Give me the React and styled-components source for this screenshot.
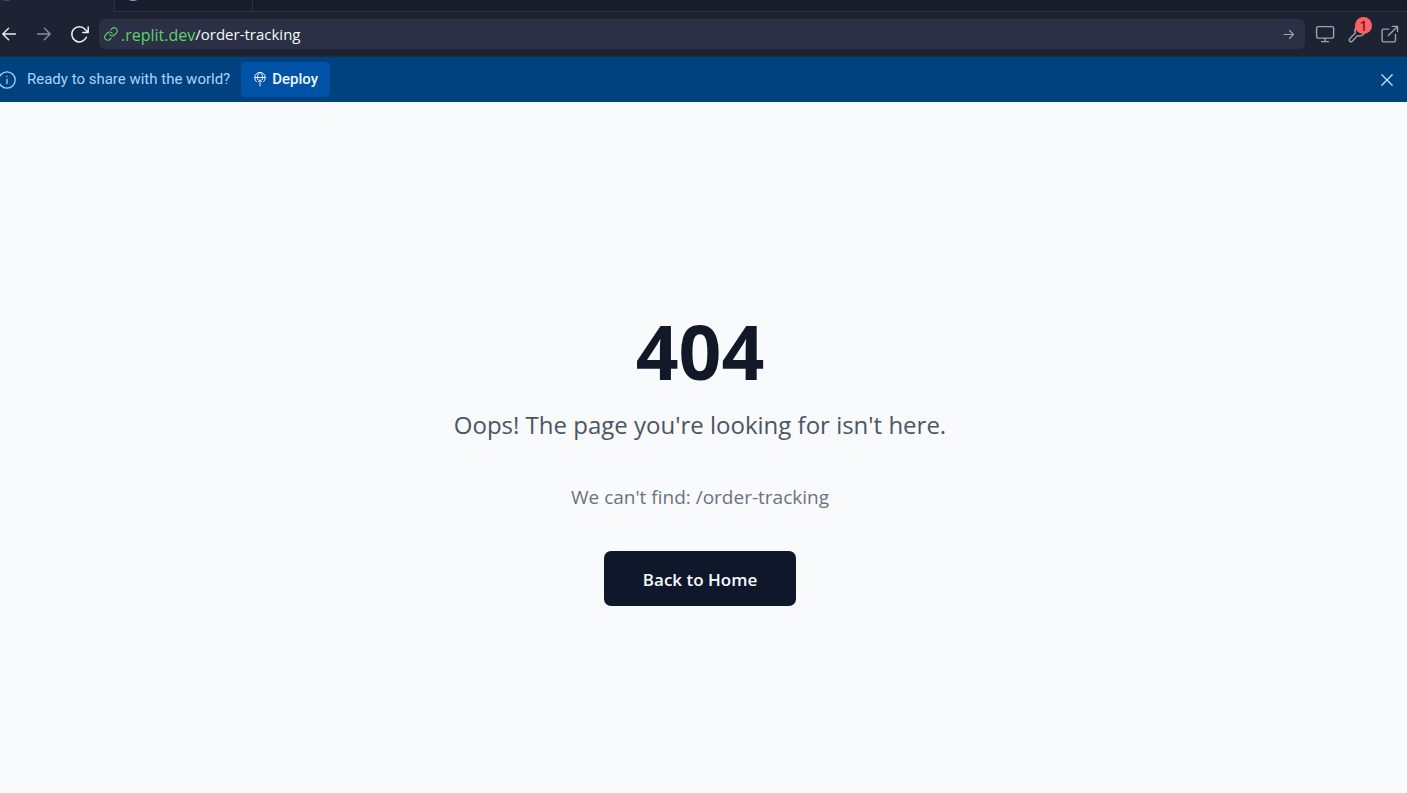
import React from "react";
import styled, { createGlobalStyle } from "styled-components";

const uiFont = `Roboto, "Liberation Sans", sans-serif`;
const pageFont = `"Open Sans", "Noto Sans", sans-serif`;

const GlobalStyle = createGlobalStyle`
  *, *::before, *::after { box-sizing: border-box; }
  body { margin: 0; background: #f9fafc; }
  button, input { font: inherit; color: inherit; }
`;

const Screen = styled.div`
  display: flex;
  flex-direction: column;
  min-height: 100vh;
  font-family: ${uiFont};
`;

const TabStrip = styled.div`
  display: flex;
  height: 12px;
  overflow: hidden;
  background: #171d2b;
`;

const Tab = styled.button`
  display: flex;
  align-items: flex-start;
  width: ${(p) => p.$width}px;
  padding: 0 0 0 ${(p) => p.$inset}px;
  border: 0;
  border-right: 1px solid #2b3245;
  border-bottom: ${(p) => (p.$active ? "0" : "1px solid #2b3245")};
  background: ${(p) => (p.$active ? "#1d2332" : "#171d2b")};
`;

const TabRest = styled.div`
  flex: 1;
  border-bottom: 1px solid #2b3245;
`;

const Favicon = styled.span`
  width: ${(p) => p.$size}px;
  height: ${(p) => p.$size}px;
  margin-top: ${(p) => 1 - p.$size}px;
  border-radius: ${(p) => (p.$round ? "50%" : "0")};
  background: ${(p) => p.$color};
`;

const Toolbar = styled.header`
  display: flex;
  align-items: center;
  gap: 10px;
  height: 45px;
  padding-right: 8px;
  border-bottom: 1px solid #262a38;
  background: #1d2332;
`;

const NavGroup = styled.nav`
  display: flex;
  align-items: center;
  gap: 17px;
`;

const ToolGroup = styled.div`
  display: flex;
  align-items: center;
  gap: 12px;
`;

const IconButton = styled.button`
  position: relative;
  display: flex;
  padding: 0;
  border: 0;
  background: none;
  color: ${(p) => p.$color || "#9ea3a8"};
  cursor: pointer;
`;

const Badge = styled.span`
  position: absolute;
  top: -7px;
  right: -5px;
  width: 17px;
  height: 17px;
  border-radius: 50%;
  background: #ff6165;
  color: #5c0a0e;
  font-family: "Noto Sans", sans-serif;
  font-size: 15px;
  line-height: 17px;
  text-align: center;
`;

const AddressBar = styled.form`
  display: flex;
  flex: 1;
  align-items: center;
  height: 30px;
  margin: 0;
  padding: 0 10px 0 5px;
  border-radius: 6px;
  background: #2b3044;
  color: #5fd16d;
  font-family: ${pageFont};
`;

const Host = styled.label`
  padding: 2px 0 0 3px;
  font-size: 16px;
  line-height: 20px;
`;

const PathInput = styled.input`
  flex: 1;
  min-width: 0;
  padding: 0;
  border: 0;
  outline: 0;
  background: none;
  color: #f5f9fc;
  font-size: 15px;
  line-height: 20px;
`;

const Banner = styled.section`
  display: flex;
  align-items: center;
  height: 45px;
  padding-right: 12px;
  background: #00427f;
  color: #a9d5fb;
  font-size: 15px;
`;

const BannerText = styled.p`
  flex: none;
  margin: 0 11px;
  padding-bottom: 1px;
  line-height: 20px;
`;

const InfoIcon = styled.svg`
  flex: none;
  margin-left: -2px;
`;

const DeployButton = styled.button`
  display: flex;
  align-items: center;
  gap: 5px;
  height: 35px;
  margin-right: auto;
  padding: 0 12px 1px;
  border: 0;
  border-radius: 5px;
  background: #0053a6;
  color: #f0f7ff;
  font-weight: 500;
  cursor: pointer;
`;

const Main = styled.main`
  display: flex;
  flex: 1;
  flex-direction: column;
  align-items: center;
  justify-content: center;
  padding: 24px 7px 0 0;
  background: #f9fafc;
  font-family: ${pageFont};
  text-align: center;
`;

const Code = styled.h1`
  margin: 0 0 18px;
  color: #111827;
  font-size: 75px;
  font-weight: 700;
  line-height: 75px;
`;

const Message = styled.p`
  margin: 0 0 40px;
  color: #4b5563;
  font-size: 24px;
  line-height: 35px;
`;

const Detail = styled.p`
  margin: 0 0 39px;
  color: #6b7280;
  font-size: 19px;
  line-height: 30px;
`;

const HomeLink = styled.a`
  padding: 2px 39px 0;
  border-radius: 7px;
  background: #0f172a;
  color: #f8fafc;
  font-size: 17px;
  font-weight: 600;
  line-height: 53px;
  text-decoration: none;
`;

function Icon({ size = 20, width = 1, children }) {
  return (
    <svg
      width={size}
      height={size}
      viewBox={`0 0 ${size} ${size}`}
      fill="none"
      stroke="currentColor"
      strokeWidth={width}
      strokeLinecap="round"
      strokeLinejoin="round"
      aria-hidden="true"
    >
      {children}
    </svg>
  );
}

export default function App() {
  return (
    <Screen>
      <GlobalStyle />
      <TabStrip>
        <Tab $active $width={115} $inset={3} aria-label="Preview tab">
          <Favicon $size={7} $color="#3c4356" />
        </Tab>
        <Tab $width={138} $inset={8} aria-label="Second tab">
          <Favicon $size={20} $round $color="#7ca6ce" />
        </Tab>
        <TabRest />
      </TabStrip>

      <Toolbar>
        <NavGroup aria-label="History">
          <IconButton $color="#e8edf1" aria-label="Back">
            <Icon size={18} width={1.4}>
              <path d="M15.5 9H3M8.6 3.2 2.8 9l5.8 5.8" />
            </Icon>
          </IconButton>
          <IconButton $color="#888e99" aria-label="Forward">
            <Icon size={18} width={1.4}>
              <path d="M2.5 9H15M9.4 3.2 15.2 9l-5.8 5.8" />
            </Icon>
          </IconButton>
          <IconButton $color="#eef2f5" aria-label="Reload">
            <Icon size={19} width={1.5}>
              <path d="M16.4 12.2a7.6 7.6 0 1 1-1.2-7.8l2.7 2.9M18.2 2v5.4h-5.4" />
            </Icon>
          </IconButton>
        </NavGroup>

        <AddressBar>
          <Icon size={14} width={1.1}>
            <path d="M5.7 7.7a3.1 3.1 0 0 0 4.7.3l1.9-1.9a3.1 3.1 0 0 0-4.4-4.4L6.8 2.8M8.2 6.3A3.1 3.1 0 0 0 3.5 6L1.6 7.9a3.1 3.1 0 0 0 4.4 4.4l1.1-1.1" />
          </Icon>
          <Host htmlFor="path">.replit.dev</Host>
          <PathInput id="path" defaultValue="/order-tracking" />
          <IconButton aria-label="Go">
            <Icon size={12} width={1.1}>
              <path d="M1 6.5h9.5M6.5 2.5l4 4-4 4" />
            </Icon>
          </IconButton>
        </AddressBar>

        <ToolGroup>
          <IconButton aria-label="Devices">
            <Icon width={1.4}>
              <rect x="1.6" y="2.6" width="17" height="11.5" rx="1.5" />
              <path d="M10 14.5v3M6.5 17.6h7" />
            </Icon>
          </IconButton>
          <IconButton aria-label="Developer tools">
            <Icon width={1.4}>
              <path d="M11.800 5.800a.8.8 0 0 0 0 1.100l1.300 1.300a.8.8 0 0 0 1.100 0l3-3a4.900 4.900 0 0 1-6.400 6.400l-5.600 5.600a1.700 1.700 0 0 1-2.500-2.500l5.600-5.600a4.900 4.900 0 0 1 6.400-6.400z" />
            </Icon>
            <Badge>1</Badge>
          </IconButton>
          <IconButton aria-label="Open in new tab">
            <Icon width={1.4}>
              <path d="M16.5 10.5v6a1.4 1.4 0 0 1-1.4 1.4H4.500a1.4 1.4 0 0 1-1.4-1.400V6.500A1.400 1.400 0 0 1 4.500 5.100h5.300M13.300 2.400h5.200v5.200M18.500 2.400 9.300 11.600" />
            </Icon>
          </IconButton>
        </ToolGroup>
      </Toolbar>

      <Banner>
        <InfoIcon width="18" height="18" viewBox="0 0 18 18" fill="none" stroke="currentColor" strokeWidth="1.3" strokeLinecap="round" aria-hidden="true">
          <circle cx="9" cy="9" r="8.2" />
          <path d="M9 8.5v4M9 5.4v.2" />
        </InfoIcon>
        <BannerText>Ready to share with the world?</BannerText>
        <DeployButton>
          <svg width="14" height="16" viewBox="0 0 14 16" fill="none" stroke="currentColor" strokeLinecap="round" aria-hidden="true">
            <path d="M3.2 10.4A5.3 5.3 0 1 1 10.8 10.4M1.8 6.5h10.4M4.7 8.6C4 5.5 4.8 2.8 7 1.5c2.2 1.3 3 4 2.3 7.1M7 15V9M5 10.8l2-2 2 2" />
          </svg>
          Deploy
        </DeployButton>
        <IconButton $color="#c0e0ff" aria-label="Dismiss">
          <Icon size={16} width={1.3}>
            <path d="m2.800 2.800 10.400 10.400M13.200 2.800 2.800 13.200" />
          </Icon>
        </IconButton>
      </Banner>

      <Main>
        <Code>404</Code>
        <Message>Oops! The page you're looking for isn't here.</Message>
        <Detail>We can't find: /order-tracking</Detail>
        <HomeLink href="/">Back to Home</HomeLink>
      </Main>
    </Screen>
  );
}
